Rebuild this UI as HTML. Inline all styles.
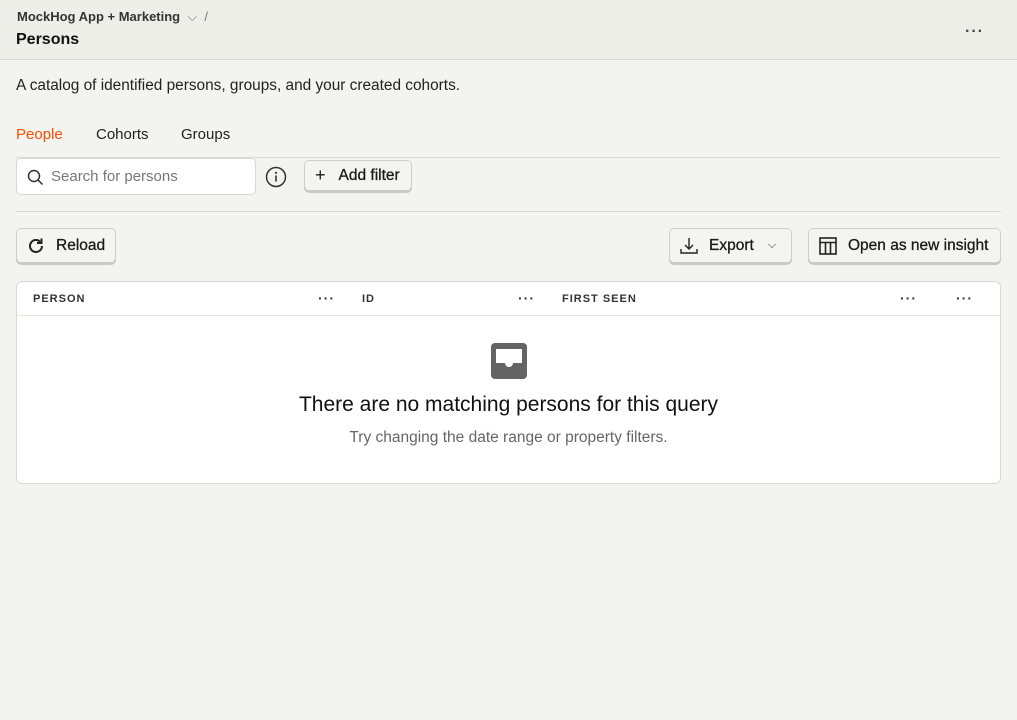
<!DOCTYPE html>
<html><head><style>
*{box-sizing:border-box;margin:0;padding:0}
body{width:1017px;height:720px;background:#f3f3ef;font-family:"Liberation Sans",sans-serif;color:#111;position:relative;overflow:hidden}
.abs{position:absolute}
.top{position:absolute;left:0;top:0;width:1017px;height:60px;background:#eeeee9;border-bottom:1px solid #d6d6d0}
.btn{position:absolute;background:#f4f4f1;border:1px solid #cfcfca;border-radius:5px;box-shadow:0 2px 0 #c9c9c4;font-size:15.5px;color:#1a1a1a;display:flex;align-items:center;-webkit-text-stroke:0.3px #1a1a1a}
.th{position:absolute;top:292px;font-size:11px;font-weight:bold;letter-spacing:1px;color:#333}
.dots{position:absolute;top:290px;font-size:14px;color:#333;letter-spacing:1px;font-weight:bold}
</style></head><body>
<div class="top">
 <div class="abs" style="left:17px;top:9px;font-size:13px;font-weight:bold;color:#333">MockHog App + Marketing <span style="font-weight:normal;color:#777">&nbsp;⌵&nbsp; /</span></div>
 <div class="abs" style="left:16px;top:31px;font-size:16px;font-weight:bold">Persons</div>
 <div class="abs" style="left:965px;top:23px;font-size:16px;font-weight:bold;color:#444;letter-spacing:1px">···</div>
</div>
<div class="abs" style="left:16px;top:77px;font-size:15.4px;color:#222">A catalog of identified persons, groups, and your created cohorts.</div>
<div class="abs" style="left:16px;top:126px;font-size:15px;color:#f54e00">People</div>
<div class="abs" style="left:96px;top:126px;font-size:15px;color:#222">Cohorts</div>
<div class="abs" style="left:181px;top:126px;font-size:15px;color:#222">Groups</div>
<div class="abs" style="left:16px;top:157px;width:985px;height:1px;background:#d9d9d4"></div>
<div class="abs" style="left:16px;top:158px;width:240px;height:37px;background:#fff;border:1px solid #d9d9d4;border-radius:5px">
 <svg class="abs" style="left:10px;top:10px" width="17" height="17" viewBox="0 0 17 17"><circle cx="7" cy="7" r="5.5" fill="none" stroke="#333" stroke-width="1.5"/><path d="M11 11l4.5 4.5" stroke="#333" stroke-width="1.5"/></svg>
 <div class="abs" style="left:34px;top:9px;font-size:15px;color:#777">Search for persons</div>
</div>
<svg class="abs" style="left:265px;top:166px" width="22" height="22" viewBox="0 0 22 22"><circle cx="11" cy="11" r="9.5" fill="none" stroke="#333" stroke-width="1.5"/><circle cx="11" cy="6.8" r="1.1" fill="#333"/><path d="M11 9.5v6" stroke="#333" stroke-width="1.6"/></svg>
<div class="btn" style="left:304px;top:160px;width:108px;height:31px"><span style="margin-left:10px;font-weight:normal;font-size:18px;-webkit-text-stroke:0">+</span><span style="margin-left:13px">Add filter</span></div>
<div class="abs" style="left:16px;top:211px;width:985px;height:1px;background:#d9d9d4"></div>
<div class="btn" style="left:16px;top:228px;width:100px;height:35px">
 <svg style="margin-left:10px" width="18" height="18" viewBox="0 0 18 18"><path d="M15 9a6 6 0 1 1-1.8-4.3" fill="none" stroke="#222" stroke-width="2"/><path d="M14.5 1.5v4.5h-4.5" fill="none" stroke="#222" stroke-width="2"/></svg><span style="margin-left:11px">Reload</span></div>
<div class="btn" style="left:669px;top:228px;width:123px;height:35px">
 <svg style="margin-left:9px" width="20" height="20" viewBox="0 0 20 20"><path d="M2 13v4h16v-4M10 2v11M6 9l4 4 4-4" fill="none" stroke="#222" stroke-width="1.4"/></svg><span style="margin-left:10px">Export</span><span style="margin-left:14px;font-size:11px;-webkit-text-stroke:0">⌵</span></div>
<div class="btn" style="left:808px;top:228px;width:193px;height:35px">
 <svg style="margin-left:9px" width="20" height="20" viewBox="0 0 20 20"><rect x="2" y="2" width="16" height="16" fill="none" stroke="#222" stroke-width="1.6"/><path d="M2 6.5h16M7.5 6.5v11.5M12.5 6.5v11.5" stroke="#222" stroke-width="1.6"/></svg><span style="margin-left:10px">Open as new insight</span></div>
<div class="abs" style="left:16px;top:281px;width:985px;height:203px;background:#fff;border:1px solid #d9d9d4;border-radius:6px"></div>
<div class="abs" style="left:17px;top:315px;width:983px;height:1px;background:#e3e3df"></div>
<div class="th" style="left:33px;top:293px">PERSON</div>
<div class="th" style="left:362px;top:293px">ID</div>
<div class="th" style="left:562px;top:293px">FIRST SEEN</div>
<div class="dots" style="left:318px">···</div>
<div class="dots" style="left:518px">···</div>
<div class="dots" style="left:900px">···</div>
<div class="dots" style="left:956px">···</div>
<svg class="abs" style="left:491px;top:343px" width="36" height="36" viewBox="0 0 36 36"><rect width="36" height="36" rx="4" fill="#646464"/><path d="M5 6h26v14h-9a4 4 0 0 1-8 0h-9z" fill="#fff"/></svg>
<div class="abs" style="left:0;width:1017px;top:393px;text-align:center;font-size:21px;color:#111">There are no matching persons for this query</div>
<div class="abs" style="left:0;width:1017px;top:429px;text-align:center;font-size:15.5px;color:#666">Try changing the date range or property filters.</div>
</body></html>
